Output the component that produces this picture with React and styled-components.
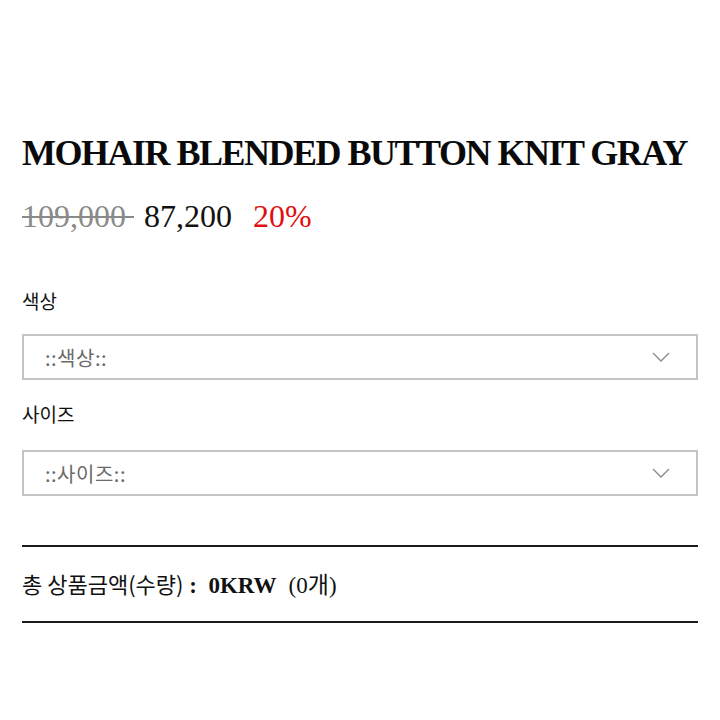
import React from "react";
import styled, { createGlobalStyle } from "styled-components";

const Global = createGlobalStyle`
  html, body { margin: 0; padding: 0; background: #fff; }
  body { font-family: "Noto Sans CJK KR", "Noto Sans", sans-serif; color: #111; }
`;

const Page = styled.div`
  padding: 131px 22px 40px 22px;
  display: flex;
  flex-direction: column;
`;

const Title = styled.h1`
  margin: 0;
  font-family: "Liberation Serif", serif;
  font-weight: 700;
  font-size: 36px;
  letter-spacing: -1.5px;
  line-height: 44px;
  color: #0a0a0a;
  white-space: nowrap;
`;

const PriceRow = styled.div`
  display: flex;
  align-items: baseline;
  margin-top: 21px;
  font-family: "Liberation Serif", serif;
  font-size: 32px;
  line-height: 40px;
`;

const OldPrice = styled.del`
  color: #8a8a8a;
  text-decoration-thickness: 2px;
  margin-right: 10px;
`;

const Price = styled.span`
  color: #111;
  margin-right: 21px;
`;

const Discount = styled.span`
  color: #e01010;
`;

const OptionLabel = styled.div`
  font-size: 19px;
  line-height: 26px;
  color: #111;
  margin-top: ${(p) => p.$top}px;
`;

const SelectBox = styled.div`
  margin-top: ${(p) => p.$top}px;
  height: 46px;
  box-sizing: border-box;
  border: 2px solid #c4c4c4;
  display: flex;
  align-items: center;
  justify-content: space-between;
  padding: 0 26px 0 21px;
`;

const Placeholder = styled.span`
  font-size: 20px;
  letter-spacing: 0.5px;
  color: #6a6a6a;
`;

const Summary = styled.div`
  margin-top: 49px;
  border-top: 2px solid #1a1a1a;
  border-bottom: 2px solid #1a1a1a;
  height: 78px;
  box-sizing: border-box;
  display: flex;
  align-items: center;
`;

const SummaryLine = styled.p`
  margin: 0;
  font-size: 22px;
  line-height: 30px;
  color: #111;
  white-space: nowrap;
`;

const Amount = styled.span`
  font-family: "Liberation Serif", serif;
  font-weight: 700;
  font-size: 23px;
`;

const Count = styled.span`
  font-family: "Liberation Serif", "Noto Sans CJK KR", serif;
  font-size: 23px;
  margin-left: 12px;
`;

const Chevron = () => (
  <svg width="18" height="10" viewBox="0 0 18 10" fill="none">
    <path d="M1 1 L9 9 L17 1" stroke="#8a8a8a" strokeWidth="1.3" />
  </svg>
);

function Select({ text, top }) {
  return (
    <SelectBox $top={top}>
      <Placeholder>{text}</Placeholder>
      <Chevron />
    </SelectBox>
  );
}

export default function App() {
  return (
    <>
      <Global />
      <Page>
        <Title>MOHAIR BLENDED BUTTON KNIT GRAY</Title>
        <PriceRow>
          <OldPrice>109,000&nbsp;</OldPrice>
          <Price>87,200</Price>
          <Discount>20%</Discount>
        </PriceRow>
        <OptionLabel $top={52}>색상</OptionLabel>
        <Select text="::색상::" top={20} />
        <OptionLabel $top={21}>사이즈</OptionLabel>
        <Select text="::사이즈::" top={23} />
        <Summary>
          <SummaryLine>
            총 상품금액(수량)<Amount> : &nbsp;0KRW</Amount>
            <Count>(0개)</Count>
          </SummaryLine>
        </Summary>
      </Page>
    </>
  );
}
